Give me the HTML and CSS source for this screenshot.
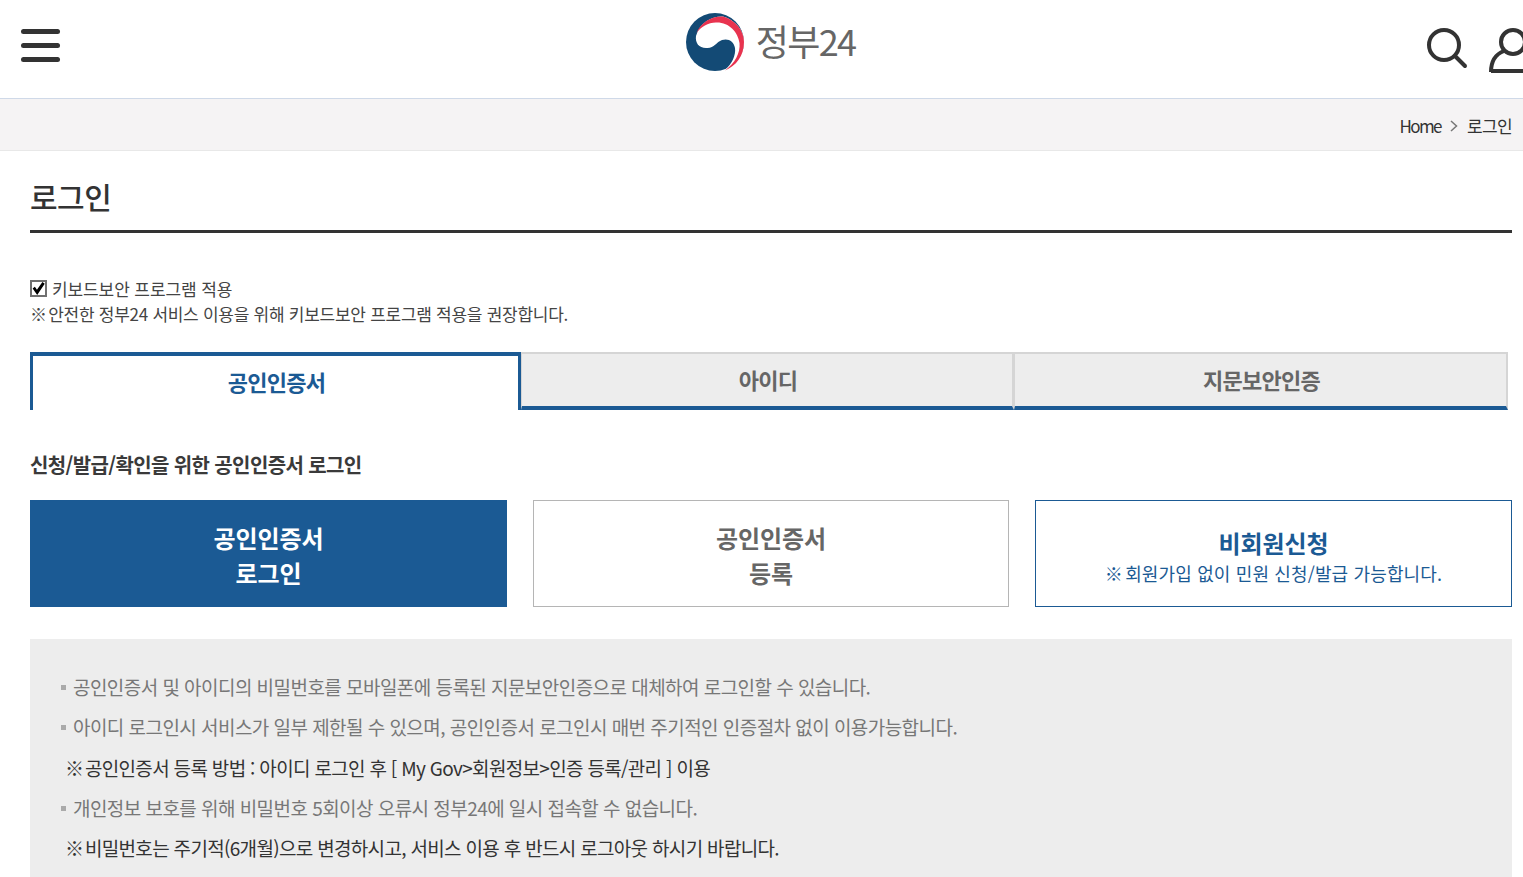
FILE: index.html
```html
<!DOCTYPE html>
<html lang="ko">
<head>
<meta charset="utf-8">
<title>로그인 | 정부24</title>
<link rel="stylesheet" href="styles.css">
</head>
<body>
<header class="top">
  <div class="menu" aria-label="메뉴"><span></span><span></span><span></span></div>
  <div class="logo">
    <svg class="mark" width="60" height="60" viewBox="0 0 60 60">
      <circle cx="30" cy="30" r="29" fill="#134a75"/>
      <path d="M11 24 C15 10 27 4 38 4.5 C50 8 59 18 59 30 C59 44 51 54 40 58 C47 52 51 43 50 36 C49 29 43 26 37 28 C31 30 29 37 21 36 C14 36 10 31 11 24Z" fill="#fff"/>
      <path d="M11.5 21 C16 10 27 4 38 4.5 C50 8 59 18 59 30 C59 44 51 54 40 58.5 C50 51 55.5 41 54.5 31 C53 20 44 10 31 10.5 C23 10.5 16 15 11.5 21Z" fill="#e8334f"/>
    </svg>
    <span class="logo-text">정부24</span>
  </div>
  <div class="tools">
    <svg width="42" height="42" viewBox="0 0 42 42" fill="none" stroke="#333" stroke-width="4" stroke-linecap="round"><circle cx="18" cy="18" r="15"/><path d="M29 29 L39 39"/></svg>
    <svg width="36" height="46" viewBox="0 0 36 46" fill="none" stroke="#333" stroke-width="4"><circle cx="25" cy="15" r="12"/><path d="M3 45 C3 33 8 27 16 24 M3 44 H36"/></svg>
  </div>
</header>
<nav class="crumb">
  <span class="home">Home</span>
  <svg width="8" height="12" viewBox="0 0 8 12" fill="none" stroke="#777" stroke-width="1.5"><path d="M1 1 L6.5 6 L1 11"/></svg>
  <span>로그인</span>
</nav>
<main class="page">
  <h1 class="title">로그인</h1>
  <div class="notice">
    <label class="check"><input type="checkbox" checked><span>키보드보안 프로그램 적용</span></label>
    <p><span class="ref">※</span> 안전한 정부24 서비스 이용을 위해 키보드보안 프로그램 적용을 권장합니다.</p>
  </div>
  <div class="tabs">
    <div class="tab active">공인인증서</div>
    <div class="tab">아이디</div>
    <div class="tab">지문보안인증</div>
  </div>
  <h2 class="sub">신청/발급/확인을 위한 공인인증서 로그인</h2>
  <div class="actions">
    <a class="btn primary">공인인증서<br>로그인</a>
    <a class="btn plain">공인인증서<br>등록</a>
    <a class="btn outline"><b>비회원신청</b><small><span class="ref">※</span> 회원가입 없이 민원 신청/발급 가능합니다.</small></a>
  </div>
  <ul class="info">
    <li>공인인증서 및 아이디의 비밀번호를 모바일폰에 등록된 지문보안인증으로 대체하여 로그인할 수 있습니다.</li>
    <li>아이디 로그인시 서비스가 일부 제한될 수 있으며, 공인인증서 로그인시 매번 주기적인 인증절차 없이 이용가능합니다.</li>
    <li class="note"><span class="ref">※</span> 공인인증서 등록 방법 : 아이디 로그인 후 [ My Gov&gt;회원정보&gt;인증 등록/관리 ] 이용</li>
    <li>개인정보 보호를 위해 비밀번호 5회이상 오류시 정부24에 일시 접속할 수 없습니다.</li>
    <li class="note"><span class="ref">※</span> 비밀번호는 주기적(6개월)으로 변경하시고, 서비스 이용 후 반드시 로그아웃 하시기 바랍니다.</li>
  </ul>
</main>
</body>
</html>
```
FILE: styles.css
```css
* { box-sizing: border-box; }
html, body { margin: 0; padding: 0; height: 877px; overflow: hidden; }
body {
  background: #fff;
  color: #333;
  font-family: "Noto Sans CJK KR", "Noto Sans", sans-serif;
  font-size: 16px;
}
.ref { margin-right: -3px; }
.top {
  height: 99px;
  border-bottom: 1px solid #cfd9e8;
  display: grid;
  grid-template-columns: 1fr auto 1fr;
  align-items: start;
  overflow: hidden;
}
.menu {
  margin: 29px 0 0 21px;
  width: 39px;
  display: flex;
  flex-direction: column;
  gap: 9px;
}
.menu span { display: block; height: 5px; border-radius: 3px; background: #333; }
.logo { display: flex; align-items: center; gap: 11px; margin-top: 12px; padding-left: 17px; }
.logo-text { font-size: 36px; line-height: 60px; letter-spacing: -1.7px; color: #666; margin-top: -4px; }
.tools { display: flex; justify-content: flex-end; align-items: flex-start; gap: 20px; margin-top: 27px; }
.tools svg { flex: none; }
.tools svg + svg { margin-right: -1px; }
.crumb {
  height: 52px;
  background: #f5f3f4;
  border-bottom: 1px solid #e8e8e8;
  display: flex;
  justify-content: flex-end;
  align-items: center;
  gap: 9px;
  padding: 2px 11px 0 0;
  font-size: 17px;
  letter-spacing: -0.6px;
  color: #333;
}
.home { letter-spacing: -1.6px; }
.page { padding: 0 11px 0 30px; }
.title {
  margin: 0;
  height: 82px;
  border-bottom: 3px solid #333;
  font-size: 30px;
  font-weight: 500;
  line-height: 90px;
  letter-spacing: -0.5px;
  color: #333;
}
.notice { margin-top: 43px; font-size: 17px; line-height: 26px; letter-spacing: -0.27px; color: #444; }
.notice p { margin: 0; }
.check { display: flex; align-items: center; height: 25px; gap: 5px; letter-spacing: -0.1px; }
.check input {
  appearance: none;
  position: relative;
  margin: 0;
  width: 17px;
  height: 17px;
  border: 2px solid #707070;
  background: #fff;
}
.check input::after {
  content: "";
  position: absolute;
  inset: 0;
  background: #000;
  clip-path: polygon(5% 50%, 22% 36%, 38% 60%, 80% 0, 98% 14%, 40% 100%);
}
.tabs { display: grid; grid-template-columns: 491px 493px 494px; margin-top: 25px; height: 58px; }
.tab {
  background: #ededed;
  border: 2px solid #d5d5d5;
  border-left-width: 1px;
  border-bottom: 4px solid #1b5a94;
  padding-left: 2px;
  text-align: center;
  font-size: 22px;
  font-weight: 700;
  line-height: 50px;
  color: #666;
  letter-spacing: -0.7px;
}
.tab.active {
  background: #fff;
  border: 4px solid #1b5a94;
  border-bottom: 0;
  border-right-width: 3px;
  border-left-width: 3px;
  color: #1b5a94;
  line-height: 50px;
}
.sub {
  margin: 40px 0 0;
  font-size: 20px;
  font-weight: 700;
  line-height: 30px;
  letter-spacing: -0.62px;
  color: #3a3a3a;
}
.actions { display: grid; grid-template-columns: 477px 476px 477px; justify-content: space-between; margin-top: 20px; height: 107px; }
.btn {
  display: flex;
  flex-direction: column;
  justify-content: center;
  align-items: center;
  text-align: center;
  font-size: 24px;
  font-weight: 700;
  line-height: 35px;
  letter-spacing: -0.1px;
}
.btn.primary { background: #1b5a94; color: #fff; display: block; padding-top: 20px; }
.btn.plain { border: 1px solid #b5b5b5; color: #666; display: block; padding-top: 19px; }
.btn.outline { border: 1px solid #1b5a94; color: #1b5a94; padding-top: 8px; }
.btn.outline b { font-weight: 700; line-height: 30px; }
.btn.outline small { font-size: 18px; font-weight: 400; line-height: 30px; letter-spacing: 0.14px; }
.info {
  list-style: none;
  margin: 32px 0 0;
  padding: 28px 30px 0;
  height: 240px;
  background: #ededed;
  font-size: 19px;
  line-height: 40.3px;
  letter-spacing: -0.55px;
  color: #777;
}
.info li { padding-left: 13px; position: relative; white-space: nowrap; }
.info li::before {
  content: "";
  position: absolute;
  left: 1px;
  top: 18px;
  width: 5px;
  height: 5px;
  background: #aaa;
}
.info li.note { color: #333; padding-left: 5px; letter-spacing: -0.68px; }
.info li.note::before { display: none; }
```
